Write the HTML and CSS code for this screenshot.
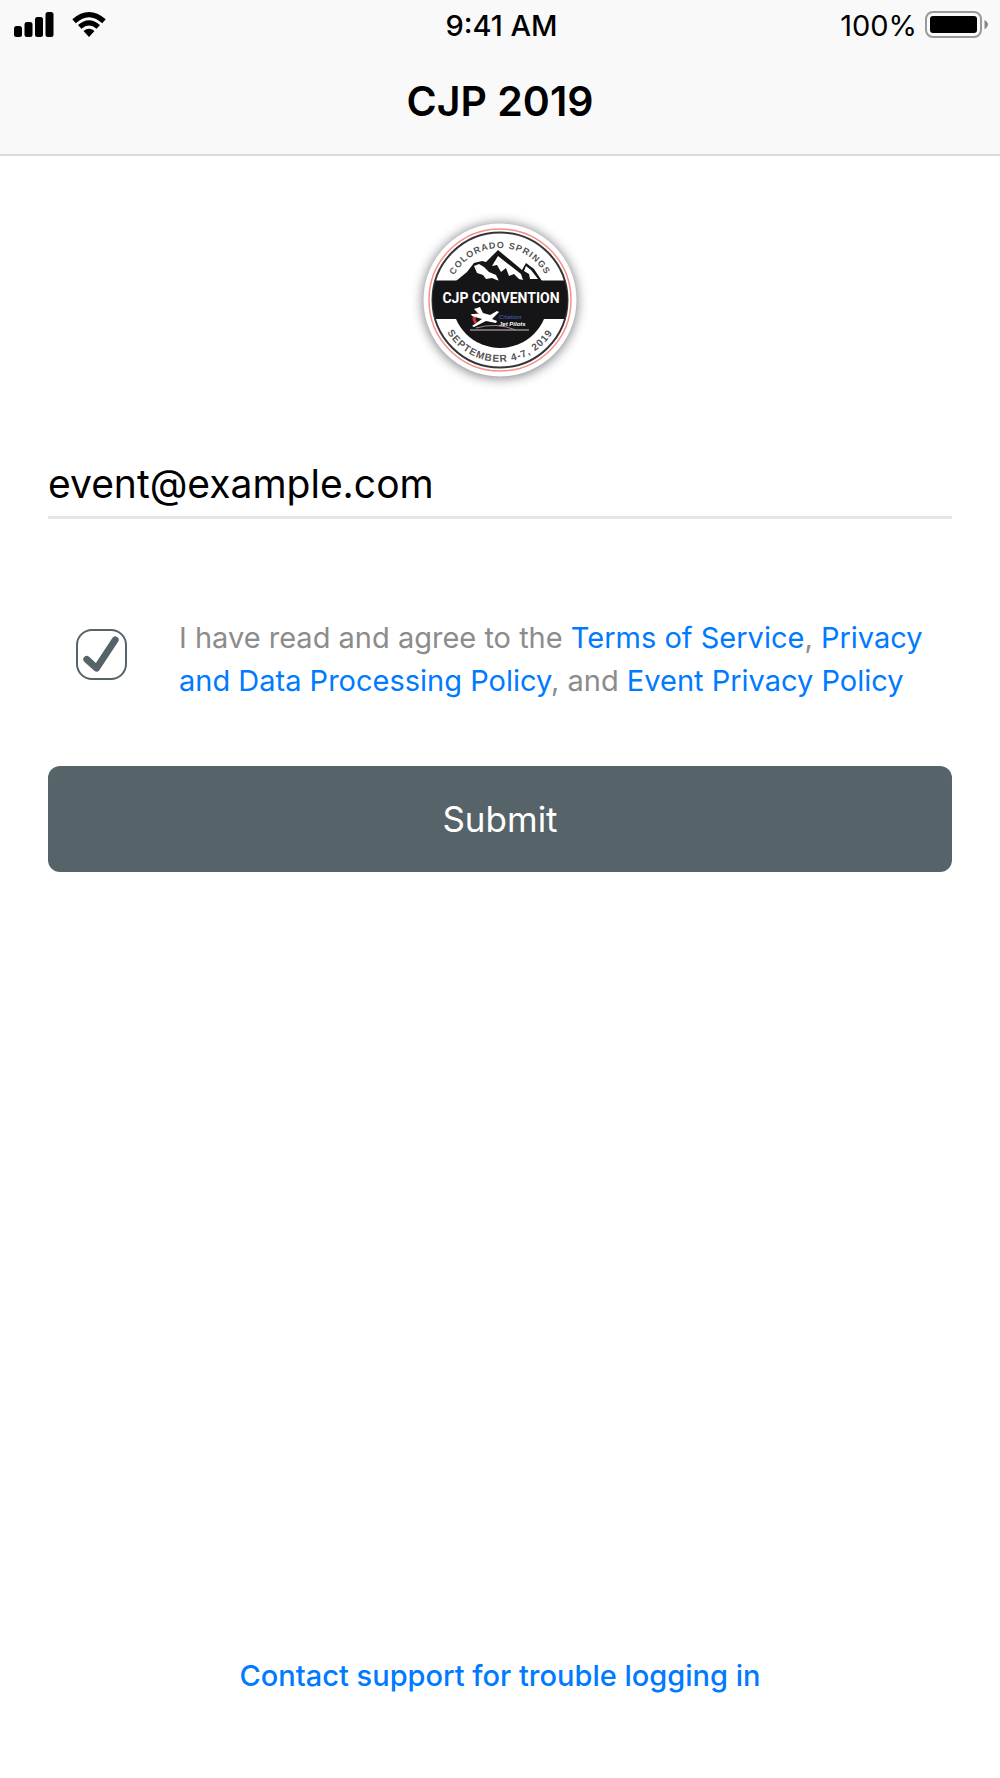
FILE: index.html
```
<!DOCTYPE html>
<html lang="en">

<head>
    <meta charset="UTF-8">
    <meta name="viewport" content="width=device-width, initial-scale=1.0">
    <title>CJP 2019</title>
    <link rel="stylesheet" href="styles.css">
</head>

<body>
    <header class="header">
        <div class="status-bar">
            <div class="status-left">
                <svg class="signal" viewBox="0 0 40 26" aria-hidden="true">
                    <rect x="0" y="14" width="8" height="11" rx="2.5" />
                    <rect x="10.5" y="10" width="8" height="15" rx="2.5" />
                    <rect x="21" y="5" width="8" height="20" rx="2.5" />
                    <rect x="31.5" y="0" width="8" height="25" rx="2.5" />
                </svg>
                <svg class="wifi" viewBox="0 0 34 26" aria-hidden="true">
                    <path d="M0.3 7.3Q17 -7.3 33.7 7.3L30.2 11.2Q17 -0.8 3.8 11.2Z" />
                    <path d="M6 13Q17 3.3 28 13L24.6 16.8Q17 10.2 9.4 16.8Z" />
                    <path d="M11.5 19Q17 14.6 22.5 19L17 25Z" />
                </svg>
            </div>
            <div class="status-time">9:41 AM</div>
            <div class="status-right">
                <span>100%</span>
                <svg class="battery" viewBox="0 0 64 28" aria-hidden="true">
                    <rect x="1" y="1" width="55" height="25" rx="7" fill="none" stroke="#999" stroke-width="2" />
                    <rect x="5" y="5" width="47" height="17" rx="3" />
                    <path d="M59.5 9Q63 11 63 13.5T59.5 18.5Z" fill="#888" />
                </svg>
            </div>
        </div>
        <h1 class="title">CJP 2019</h1>
    </header>

    <main class="content">
        <svg class="logo" viewBox="0 0 200 200" role="img" aria-label="CJP Convention">
            <defs>
                <filter id="glow" x="-20%" y="-20%" width="140%" height="140%">
                    <feGaussianBlur stdDeviation="6" />
                </filter>
                <path id="arc-top" d="M48 100A52 52 0 0 1 152 100" />
                <path id="arc-bottom" d="M38 100A62 62 0 0 0 162 100" />
            </defs>
            <circle cx="100" cy="101" r="77" fill="#6c6c72" opacity="0.9" filter="url(#glow)" />
            <circle cx="100" cy="100" r="76.5" fill="#fff" />
            <circle cx="100" cy="100" r="71" fill="none" stroke="#f58f88" stroke-width="1.5" />
            <circle cx="100" cy="100" r="67.5" fill="#fff" stroke="#333537" stroke-width="2" />
            <!-- lower half of the inner disc, the ridge stands on the band -->
            <path d="M52 100A48 48 0 0 0 148 100Z" fill="#151517" />
            <path d="M56 81L67 72L74 63L82 61L86 62L98 50L122 70L126 63L134 69L142 81Z" fill="#151517" />
            <path d="M74 66L79 64L84 67L89 72L96 75L99 81L92 78L86 79L83 75L77 73Z" fill="#fff" />
            <path d="M98 56L92 66L97 65L101 72L106 68L109 76L114 74L119 79L123 80L121 74Z" fill="#fff" />
            <path d="M126 66L124 71L129 74L130 79L138 79L131 70Z" fill="#fff" />
            <path d="M35.5 80.5H164.5Q167.5 90 167.5 100Q167.5 110 164.5 119H35.5Q32.5 110 32.5 100Q32.5 90 35.5 80.5Z" fill="#151517" />
            <text class="logo-name" x="101" y="103" text-anchor="middle">CJP CONVENTION</text>
            <text class="logo-arc"><textPath href="#arc-top" startOffset="50%" text-anchor="middle">COLORADO SPRINGS</textPath></text>
            <text class="logo-arc logo-date"><textPath href="#arc-bottom" startOffset="50%" text-anchor="middle">SEPTEMBER 4-7, 2019</textPath></text>
            <!-- jet -->
            <path d="M79 113Q71 117 76 123" fill="none" stroke="#d33" stroke-width="3" />
            <path d="M74 109L80 107L83 113L90 115L97 111L99 112L92 119L97 121L96 123L86 121L74 127L72 126L82 119L72 116L71 114L79 114Z" fill="#fff" />
            <text class="logo-brand logo-brand-blue" x="99" y="119">Citation</text>
            <text class="logo-brand" x="99" y="126">Jet Pilots</text>
            <path d="M70 130H129" stroke="#8b8b90" stroke-width="1.5" />
            <path d="M76 128Q96 122 116 130" fill="none" stroke="#a88" stroke-width="1" />
        </svg>

        <form class="login-form">
            <input class="email" type="email" value="event@example.com" aria-label="Email">
            <div class="agreement">
                <span class="checkbox">
                    <input type="checkbox" id="agree" checked>
                    <svg class="checkmark" viewBox="0 0 52 52" aria-hidden="true">
                        <path d="M11 31L21 40L40 11" />
                    </svg>
                </span>
                <label for="agree">I have read and agree to the <a href="#">Terms of Service</a>, <a href="#">Privacy and Data Processing Policy</a>, and <a href="#">Event Privacy Policy</a></label>
            </div>
            <button class="submit" type="submit">Submit</button>
        </form>
    </main>

    <footer class="footer">
        <a href="#">Contact support for trouble logging in</a>
    </footer>
</body>

</html>
```
FILE: styles.css
```
* {
    box-sizing: border-box;
}

body {
    display: flex;
    flex-direction: column;
    min-height: 100vh;
    margin: 0;
    background: #fff;
    color: #000;
    font-family: Inter, sans-serif;
    font-size: 29px;
}

a {
    color: #007aff;
    text-decoration: none;
}

.header {
    background: #f9f9f9;
    border-bottom: 2px solid #dcdcdc;
}

.status-bar {
    display: grid;
    grid-template-columns: 1fr auto 1fr;
    align-items: center;
    height: 50px;
    padding: 0 11px 0 14px;
}

.status-left {
    display: flex;
    gap: 18px;
}

.status-time {
    font-weight: 500;
}

.status-right {
    display: flex;
    align-items: center;
    justify-content: flex-end;
    gap: 8px;
}

.signal {
    width: 40px;
    height: 26px;
}

.wifi {
    width: 34px;
    height: 26px;
}

.battery {
    width: 64px;
    height: 28px;
}

.title {
    margin: 0;
    padding: 27px 0 29px;
    font-size: 41px;
    font-weight: 600;
    line-height: 48px;
    text-align: center;
}

.content {
    flex: 1;
    padding: 44px 48px 0;
}

.logo {
    display: block;
    width: 200px;
    height: 200px;
    margin: 0 auto;
}

.logo-name {
    fill: #fff;
    font-family: Roboto, sans-serif;
    font-size: 14px;
    font-weight: 700;
}

.logo-arc {
    fill: #555;
    font-family: "Liberation Sans", sans-serif;
    font-size: 9px;
    font-weight: 700;
    letter-spacing: 1px;
}

.logo-date {
    font-size: 10px;
}

.logo-brand {
    fill: #fff;
    font-family: "Liberation Sans", sans-serif;
    font-size: 6px;
    font-style: italic;
    font-weight: 700;
}

.logo-brand-blue {
    fill: #3b4f9c;
}

.email {
    display: block;
    width: 100%;
    height: 68px;
    margin-top: 51px;
    padding: 0;
    border: 0;
    border-bottom: 3px solid #e6e6e6;
    border-radius: 0;
    outline: none;
    background: none;
    color: #000;
    font: inherit;
    font-size: 39px;
}

.agreement {
    display: flex;
    align-items: flex-start;
    gap: 52px;
    margin: 97px 0 64px;
    padding: 0 20px 0 28px;
    color: #8c8c8c;
    line-height: 43px;
}

.checkbox {
    position: relative;
    flex: none;
    width: 51px;
    height: 51px;
    margin-top: 13px;
}

.checkbox input {
    display: block;
    width: 100%;
    height: 100%;
    margin: 0;
    border: 2px solid #566368;
    border-radius: 16px;
    appearance: none;
}

.checkmark {
    position: absolute;
    inset: 0;
    fill: none;
    stroke: #566368;
    stroke-width: 7;
    stroke-linecap: round;
    stroke-linejoin: round;
    pointer-events: none;
}

.checkbox input:not(:checked) + .checkmark {
    display: none;
}

.submit {
    display: block;
    width: 100%;
    height: 106px;
    border: 0;
    border-radius: 12px;
    background: #566368;
    color: #fff;
    font: inherit;
    font-size: 35px;
    cursor: pointer;
}

.footer {
    padding: 0 48px 84px;
    font-weight: 500;
    line-height: 36px;
    text-align: center;
}
```
